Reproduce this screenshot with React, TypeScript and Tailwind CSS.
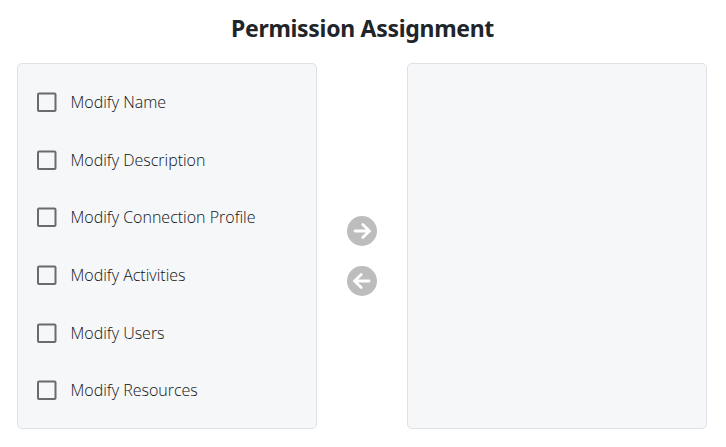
const permissions = ['Modify Name', 'Modify Description', 'Modify Connection Profile', 'Modify Activities', 'Modify Users', 'Modify Resources'];

function MoveButton({ label, left = false }: { label: string; left?: boolean }) {
  return (
    <button aria-label={label} className="size-[30px] rounded-full bg-[#bdbdbd]">
      <svg viewBox="0 0 30 30" className={left ? 'size-[30px] rotate-180' : 'size-[30px]'} fill="none" stroke="#fff" strokeWidth="2.8" strokeLinecap="round">
        <path d="M8 15H21.5M15.8 8.4L22.4 15L15.8 21.6" />
      </svg>
    </button>
  );
}

export default function App() {
  return (
    <main className="h-[447px] w-[726px] overflow-hidden bg-white px-[17px] pt-[10px] font-['Open_Sans','Noto_Sans',sans-serif] text-[#212529]">
      <h1 className="mb-[17px] pr-[1px] text-center font-['Noto_Sans',sans-serif] text-[23px] leading-9 font-bold tracking-[-0.3px] whitespace-nowrap">
        Permission Assignment
      </h1>
      <div className="flex">
        <section className="h-[366px] w-[300px] rounded-[5px] border border-[#dee2e6] bg-[#f5f7f9] pt-[9.5px] pl-[17px]">
          {permissions.map((name) => (
            <label key={name} className="flex h-[57.6px] items-center">
              <svg className="mr-[11.5px] size-6" viewBox="0 0 24 24" fill="none" stroke="#6b6b6d" strokeWidth="2">
                <rect x="3" y="3.5" width="17.5" height="17.5" rx="1" />
              </svg>
              <span className="text-base leading-6 font-light whitespace-nowrap text-[#101214]">{name}</span>
            </label>
          ))}
        </section>
        <div className="flex w-[90px] flex-col items-center justify-center gap-5 pt-[20px]">
          <MoveButton label="Move selected right" />
          <MoveButton label="Move selected left" left />
        </div>
        <section className="h-[366px] w-[300px] rounded-[5px] border border-[#dee2e6] bg-[#f5f7f9]" />
      </div>
    </main>
  );
}
